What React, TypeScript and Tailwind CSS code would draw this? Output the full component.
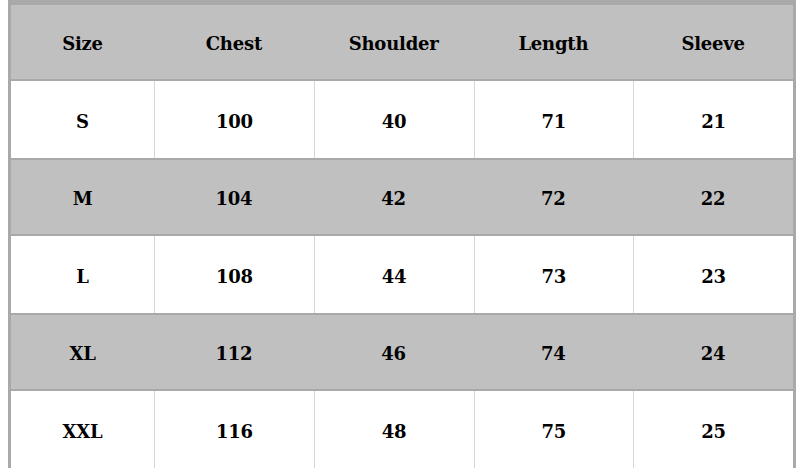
const headers = ['Size', 'Chest', 'Shoulder', 'Length', 'Sleeve'];

const rows = [
  ['S', '100', '40', '71', '21'],
  ['M', '104', '42', '72', '22'],
  ['L', '108', '44', '73', '23'],
  ['XL', '112', '46', '74', '24'],
  ['XXL', '116', '48', '75', '25'],
];

function Row({ cells, gray }: { cells: string[]; gray: boolean }) {
  return (
    <div
      className={
        gray
          ? 'grid grid-cols-[143px_repeat(4,1fr)] h-[77.5px] bg-[#c0c0c0] border-y-2 border-[#a9a9a9]'
          : 'grid grid-cols-[143px_repeat(4,1fr)] h-[77.5px] bg-white'
      }
    >
      {cells.map((c, i) => (
        <div
          key={i}
          className={
            'flex items-center justify-center pt-1 ' +
            (!gray && i > 0 ? 'border-l border-[#d6d6d6]' : '')
          }
        >
          {c}
        </div>
      ))}
    </div>
  );
}

export default function App() {
  return (
    <div className="w-[798px] h-[468px] bg-white pl-2 pr-[2px] overflow-hidden">
      <div
        className="h-full border-x-[3px] border-t-[3px] border-[#a9a9a9] text-[18px] font-bold text-black tracking-[-0.2px]"
        style={{ fontFamily: '"DejaVu Serif", serif' }}
      >
        <Row cells={headers} gray />
        {rows.map((r, i) => (
          <Row key={r[0]} cells={r} gray={i % 2 === 1} />
        ))}
      </div>
    </div>
  );
}
